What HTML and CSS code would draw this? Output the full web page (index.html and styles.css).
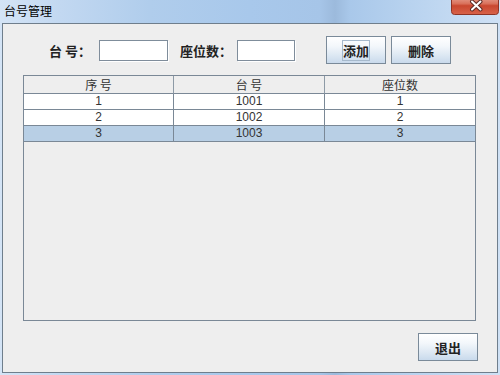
FILE: index.html
```html
<!DOCTYPE html>
<html>
<head>
<meta charset="utf-8">
<link rel="stylesheet" href="styles.css">
</head>
<body>
<div class="window">
  <div class="titlebar">
    <span class="title">台号管理</span>
    <span class="close">
      <svg width="48" height="15" viewBox="0 0 48 15">
        <defs>
          <linearGradient id="cg" x1="0" y1="0" x2="0" y2="1">
            <stop offset="0" stop-color="#eab0a2"/>
            <stop offset="0.45" stop-color="#d9705a"/>
            <stop offset="0.55" stop-color="#c9472f"/>
            <stop offset="1" stop-color="#d8634a"/>
          </linearGradient>
        </defs>
        <rect x="0.5" y="-5" width="47" height="19.5" rx="3" fill="url(#cg)" stroke="#8e3426"/>
        <path d="M21 1.5 L29.5 9.5 M29.5 1.5 L21 9.5" stroke="#5a2a24" stroke-width="4" stroke-linecap="round"/>
        <path d="M21 1.5 L29.5 9.5 M29.5 1.5 L21 9.5" stroke="#ffffff" stroke-width="2" stroke-linecap="round"/>
      </svg>
    </span>
  </div>
  <div class="panel">
    <div class="toolbar">
      <span class="lbl lbl-no">台 号：</span>
      <div class="field field-no"></div>
      <span class="lbl lbl-seat">座位数：</span>
      <div class="field field-seat"></div>
      <button class="btn btn-add"><span class="focus">添加</span></button>
      <button class="btn btn-del">删除</button>
    </div>
    <div class="pane">
      <div class="grid">
        <div class="hcell">序 号</div>
        <div class="hcell">台 号</div>
        <div class="hcell last">座位数</div>

        <div class="cell">1</div>
        <div class="cell">1001</div>
        <div class="cell last">1</div>

        <div class="cell">2</div>
        <div class="cell">1002</div>
        <div class="cell last">2</div>

        <div class="cell sel">3</div>
        <div class="cell sel">1003</div>
        <div class="cell sel last">3</div>
      </div>
    </div>
    <div class="footer">
      <button class="btn btn-exit">退出</button>
    </div>
  </div>
</div>
</body>
</html>
```
FILE: styles.css
```css
html, body {
  margin: 0;
  padding: 0;
}
body {
  width: 500px;
  height: 375px;
  overflow: hidden;
  font-family: "Noto Sans CJK SC", "Liberation Sans", sans-serif;
}
.window {
  width: 500px;
  height: 375px;
  display: flex;
  flex-direction: column;
  background: linear-gradient(90deg, #d4e4f6 0%, #c2d8f1 12%, #b0cdec 30%, #a8c8eb 50%, #a6c5e8 64%, #9cbadc 67%, #a9c8ea 70%, #bcd5f0 85%, #cfe1f5 100%);
}
.titlebar {
  height: 23px;
  display: flex;
  justify-content: space-between;
  align-items: flex-start;
}
.title {
  padding-left: 4px;
  font-size: 12px;
  line-height: 22px;
  color: #000;
}
.close {
  margin-right: 1px;
  height: 15px;
  display: flex;
}
.panel {
  margin-left: 2px;
  width: 496px;
  height: 350px;
  box-sizing: border-box;
  border: 1px solid #6f7e8c;
  background: #eeeeee;
  display: flex;
  flex-direction: column;
}
.toolbar {
  margin-top: 12px;
  height: 28px;
  display: flex;
  align-items: center;
  padding-left: 46px;
}
.lbl {
  font-size: 13px;
  font-weight: bold;
  color: #222;
  white-space: pre;
}
.lbl-no {
  width: 50px;
}
.lbl-seat {
  margin-left: 12px;
  width: 57px;
}
.field {
  height: 21px;
  box-sizing: border-box;
  background: #fff;
  border: 1px solid #7f8d9b;
  box-shadow: 1px 1px 0 #ffffff;
}
.field-no {
  width: 69px;
}
.field-seat {
  width: 58px;
}
.btn {
  width: 60px;
  height: 28px;
  box-sizing: border-box;
  border: 1px solid #7a8a99;
  border-radius: 0;
  padding: 0;
  margin: 0;
  background: linear-gradient(#ffffff 0%, #f3f7fb 35%, #dde8f3 70%, #c9daec 100%);
  font-family: "Noto Sans CJK SC", sans-serif;
  font-size: 13px;
  font-weight: bold;
  color: #222;
  display: flex;
  align-items: center;
  justify-content: center;
}
.btn-add {
  margin-left: 31px;
}
.btn-del {
  margin-left: 5px;
}
.focus {
  border: 1px solid #a6b9cc;
  height: 19px;
  line-height: 19px;
  padding: 0 0;
  width: 26px;
  text-align: center;
}
.pane {
  margin: 11px 0 0 20px;
  width: 453px;
  height: 246px;
  box-sizing: border-box;
  border: 1px solid #7a8896;
  background: #eeeeee;
}
.grid {
  display: grid;
  grid-template-columns: 150px 151px 150px;
}
.hcell {
  height: 18px;
  box-sizing: border-box;
  border-right: 1px solid #8d9aa6;
  border-bottom: 1px solid #7a8896;
  background: #eeeeee;
  font-size: 12px;
  line-height: 17px;
  text-align: center;
  color: #333;
  white-space: pre;
}
.cell {
  height: 16px;
  box-sizing: border-box;
  border-right: 1px solid #7a8896;
  border-bottom: 1px solid #7a8896;
  background: #ffffff;
  font-family: "Liberation Sans", sans-serif;
  font-size: 12px;
  line-height: 15px;
  text-align: center;
  color: #333;
}
.last {
  border-right: none;
}
.sel {
  background: #b8cfe5;
}
.footer {
  margin-top: 12px;
  display: flex;
  justify-content: flex-end;
  padding-right: 19px;
}
```
